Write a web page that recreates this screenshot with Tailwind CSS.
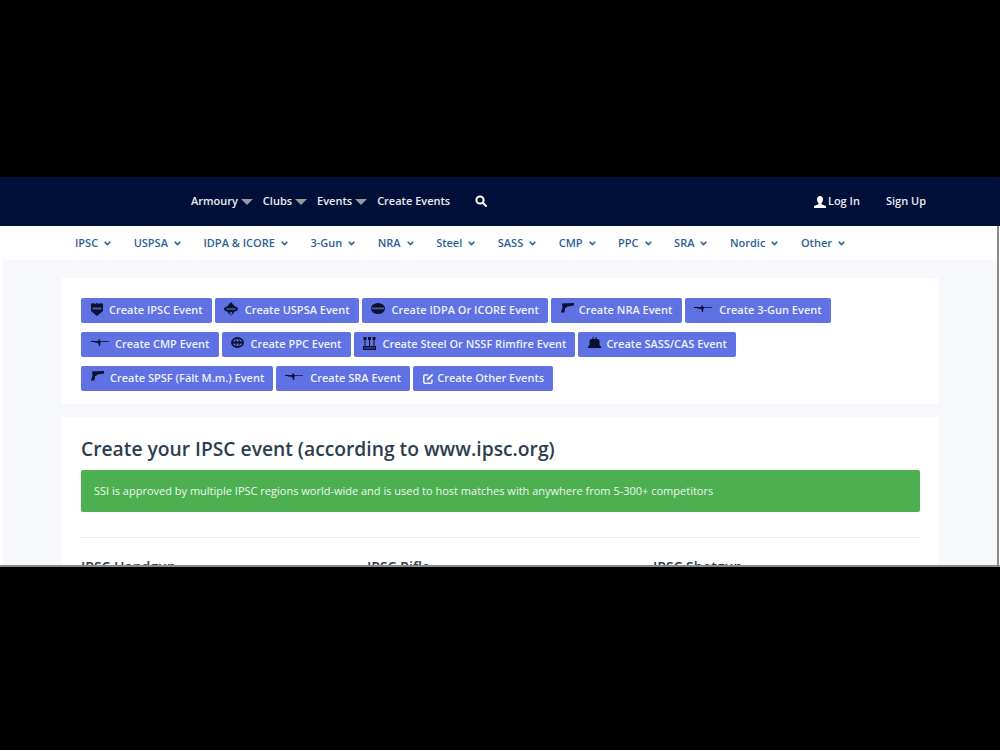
<!DOCTYPE html>
<html lang="en">
<head>
  <meta charset="UTF-8">
  <title>Create Events</title>
  <script src="https://cdn.jsdelivr.net/npm/@tailwindcss/browser@4"></script>
</head>
<body class="bg-black h-[750px] overflow-hidden font-['Open_Sans',sans-serif]">
  <div class="h-[177px]"></div>

  <div class="h-[390px] overflow-hidden bg-white flex flex-col border-b-2 border-[#8a8a8a]">
    <!-- TOP NAV -->
    <nav class="h-[49px] shrink-0 bg-[#001038] flex items-center text-[11px] font-semibold text-[#e8ecf2] pl-[191px]">
      <a class="mr-[3px]">Armoury</a>
      <span class="w-0 h-0 border-x-[6px] border-x-transparent border-t-[6px] border-t-[#9a9a9a] mr-[10px]"></span>
      <a class="mr-[3px]">Clubs</a>
      <span class="w-0 h-0 border-x-[6px] border-x-transparent border-t-[6px] border-t-[#9a9a9a] mr-[10px]"></span>
      <a class="mr-[3px]">Events</a>
      <span class="w-0 h-0 border-x-[6px] border-x-transparent border-t-[6px] border-t-[#9a9a9a] mr-[10px]"></span>
      <a class="mr-[25px]">Create Events</a>
      <svg class="w-[12px] h-[12px] -mt-[1px]" viewBox="0 0 12 12" fill="none" stroke="#fff" stroke-width="2"><circle cx="5" cy="5" r="3.6"/><path d="M7.8 7.8 11 11" stroke-linecap="round"/></svg>
      <svg class="w-[12px] h-[12px] ml-auto mr-[2px]" viewBox="0 0 12 12" fill="#fff"><path d="M6 0c1.800 0 3 1.300 3 3.200C9 5 8.300 6.400 7.500 7v1.200L12 10v2H0v-2l4.500-1.800V7C3.700 6.400 3 5 3 3.200 3 1.300 4.200 0 6 0z"/></svg>
      <a class="mr-[26px]">Log In</a>
      <a class="mr-[74px]">Sign Up</a>
    </nav>

    <!-- SUB NAV -->
    <nav class="h-[34px] shrink-0 mr-[1px] bg-white border-r-2 border-[#8a8a8a] flex items-center gap-[22.5px] pl-[75px] text-[11px] font-semibold text-[#2c5f95]">
      <a class="flex items-center gap-[6px]">IPSC<svg class="w-[7px] h-[5px]" viewBox="0 0 7 5" fill="none" stroke="#2c5f95" stroke-width="1.6"><path d="M.7.8 3.500 3.600 6.300.8"/></svg></a>
      <a class="flex items-center gap-[6px]">USPSA<svg class="w-[7px] h-[5px]" viewBox="0 0 7 5" fill="none" stroke="#2c5f95" stroke-width="1.6"><path d="M.7.8 3.500 3.600 6.300.8"/></svg></a>
      <a class="flex items-center gap-[6px]">IDPA &amp; ICORE<svg class="w-[7px] h-[5px]" viewBox="0 0 7 5" fill="none" stroke="#2c5f95" stroke-width="1.6"><path d="M.7.8 3.500 3.600 6.300.8"/></svg></a>
      <a class="flex items-center gap-[6px]">3-Gun<svg class="w-[7px] h-[5px]" viewBox="0 0 7 5" fill="none" stroke="#2c5f95" stroke-width="1.6"><path d="M.7.8 3.500 3.600 6.300.8"/></svg></a>
      <a class="flex items-center gap-[6px]">NRA<svg class="w-[7px] h-[5px]" viewBox="0 0 7 5" fill="none" stroke="#2c5f95" stroke-width="1.6"><path d="M.7.8 3.500 3.600 6.300.8"/></svg></a>
      <a class="flex items-center gap-[6px]">Steel<svg class="w-[7px] h-[5px]" viewBox="0 0 7 5" fill="none" stroke="#2c5f95" stroke-width="1.6"><path d="M.7.8 3.500 3.600 6.300.8"/></svg></a>
      <a class="flex items-center gap-[6px]">SASS<svg class="w-[7px] h-[5px]" viewBox="0 0 7 5" fill="none" stroke="#2c5f95" stroke-width="1.6"><path d="M.7.8 3.500 3.600 6.300.8"/></svg></a>
      <a class="flex items-center gap-[6px]">CMP<svg class="w-[7px] h-[5px]" viewBox="0 0 7 5" fill="none" stroke="#2c5f95" stroke-width="1.6"><path d="M.7.8 3.500 3.600 6.300.8"/></svg></a>
      <a class="flex items-center gap-[6px]">PPC<svg class="w-[7px] h-[5px]" viewBox="0 0 7 5" fill="none" stroke="#2c5f95" stroke-width="1.6"><path d="M.7.8 3.500 3.600 6.300.8"/></svg></a>
      <a class="flex items-center gap-[6px]">SRA<svg class="w-[7px] h-[5px]" viewBox="0 0 7 5" fill="none" stroke="#2c5f95" stroke-width="1.6"><path d="M.7.8 3.500 3.600 6.300.8"/></svg></a>
      <a class="flex items-center gap-[6px]">Nordic<svg class="w-[7px] h-[5px]" viewBox="0 0 7 5" fill="none" stroke="#2c5f95" stroke-width="1.6"><path d="M.7.8 3.500 3.600 6.300.8"/></svg></a>
      <a class="flex items-center gap-[6px]">Other<svg class="w-[7px] h-[5px]" viewBox="0 0 7 5" fill="none" stroke="#2c5f95" stroke-width="1.6"><path d="M.7.8 3.500 3.600 6.300.8"/></svg></a>
    </nav>

    <!-- CONTENT -->
    <main class="flex-1 ml-[3px] mr-[1px] bg-[#f6f8fb] pl-[59px] pr-[59px] pt-[18px] border-r-2 border-[#8a8a8a]">
      <section class="h-[126px] bg-white pl-[19px] pr-[18px] pt-[20px] flex flex-wrap content-start gap-x-[3px] gap-y-[9px] text-[11px] font-semibold text-[#eef0fb]">
        <a class="h-[25px] flex items-center gap-[6px] pl-[10px] pr-[9px] bg-[#5f71e3] rounded-[2px]"><svg class="w-[12px] h-[13px] -mt-[3px]" viewBox="0 0 12 13" fill="#0b1230"><path d="M0 1 2 0l2 1 2-1 2 1 2-1 2 1v7l-6 5-6-5z"/><path d="M1.500 4.500h9v2h-9z" fill="#4a5a9c"/></svg>Create IPSC Event</a>
        <a class="h-[25px] flex items-center gap-[7px] pl-[9px] pr-[9px] bg-[#5f71e3] rounded-[2px]"><svg class="w-[14px] h-[14px] -mt-[3px]" viewBox="0 0 14 14" fill="#0b1230"><path d="M7 0 10.500 4 7 14 3.500 4zM7 14l3.500-4h-7z"/><ellipse cx="7" cy="7" rx="7" ry="3.200"/><path d="M2.500 6.200h9v1.600h-9z" fill="#4a5a9c"/></svg>Create USPSA Event</a>
        <a class="h-[25px] flex items-center gap-[7px] pl-[9px] pr-[9px] bg-[#5f71e3] rounded-[2px]"><svg class="w-[14px] h-[11px] -mt-[4px]" viewBox="0 0 14 11" fill="#0b1230"><ellipse cx="7" cy="5.500" rx="7" ry="5.500"/><path d="M1 4.500h12v1.800H1z" fill="#4a5a9c"/></svg>Create IDPA Or ICORE Event</a>
        <a class="h-[25px] flex items-center gap-[5px] pl-[10px] pr-[10px] bg-[#5f71e3] rounded-[2px]"><svg class="w-[13px] h-[10px] -mt-[5px]" viewBox="0 0 13 10" fill="#0b1230"><path d="M1 .5 13 0v2.500L6.500 3.500 5 5H4L3.500 9.500H0L1.500 4.500z"/></svg>Create NRA Event</a>
        <a class="h-[25px] flex items-center gap-[7px] pl-[9px] pr-[9px] bg-[#5f71e3] rounded-[2px]"><svg class="w-[18px] h-[7px] -mt-[5px]" viewBox="0 0 18 7" fill="#0b1230"><path d="M0 2 3 1.700V3H0zM3 2h4l1-2 1.500 2H18v.7H10L9.500 4 9 7H8L7.500 4.500 5 3.500H3z"/></svg>Create 3-Gun Event</a>
        <a class="h-[25px] flex items-center gap-[6px] pl-[10px] pr-[10px] bg-[#5f71e3] rounded-[2px]"><svg class="w-[18px] h-[7px] -mt-[5px]" viewBox="0 0 18 7" fill="#0b1230"><path d="M0 2 3 1.700V3H0zM3 2h4l1-2 1.500 2H18v.7H10L9.500 4 9 7H8L7.500 4.500 5 3.500H3z"/></svg>Create CMP Event</a>
        <a class="h-[25px] flex items-center gap-[6px] pl-[9px] pr-[10px] bg-[#5f71e3] rounded-[2px]"><svg class="w-[13px] h-[11px] -mt-[4px]" viewBox="0 0 13 11" fill="none" stroke="#0b1230" stroke-width="1.6"><ellipse cx="6.500" cy="5.500" rx="5.600" ry="4.600"/><path d="M1 5.500h11" stroke-width="2.200"/><ellipse cx="6.500" cy="5.500" rx="2" ry="4.200" stroke-width="1"/></svg>Create PPC Event</a>
        <a class="h-[25px] flex items-center gap-[6px] pl-[9px] pr-[9px] bg-[#5f71e3] rounded-[2px]"><svg class="w-[13px] h-[13px] -mt-[3px]" viewBox="0 0 13 13" fill="#0b1230"><path d="M0 9h13v4H0z"/><path d="M.5 0h3v3h-1v6h-1V3h-1zM5 0h3v3H7v6H6V3H5zM9.500 0h3v3h-1v6h-1V3h-1z"/><path d="M1 10.500h11v1H1z" fill="#4a5a9c"/></svg>Create Steel Or NSSF Rimfire Event</a>
        <a class="h-[25px] flex items-center gap-[5px] pl-[10px] pr-[9px] bg-[#5f71e3] rounded-[2px]"><svg class="w-[13px] h-[11px] -mt-[4px]" viewBox="0 0 13 11" fill="#0b1230"><path d="M2.500 2h2V0h1v2h2V0h1v2h2v1l1 .5V8l1.500 1.500V11H0V9.500L1.500 8V3.500l1-.5z"/></svg>Create SASS/CAS Event</a>
        <a class="h-[25px] flex items-center gap-[6px] pl-[10px] pr-[9px] bg-[#5f71e3] rounded-[2px]"><svg class="w-[13px] h-[10px] -mt-[5px]" viewBox="0 0 13 10" fill="#0b1230"><path d="M1 .5 13 0v2.500L6.500 3.500 5 5H4L3.500 9.500H0L1.500 4.500z"/></svg>Create SPSF (Fält M.m.) Event</a>
        <a class="h-[25px] flex items-center gap-[7px] pl-[9px] pr-[9px] bg-[#5f71e3] rounded-[2px]"><svg class="w-[18px] h-[7px] -mt-[5px]" viewBox="0 0 18 7" fill="#0b1230"><path d="M0 2 3 1.700V3H0zM3 2h4l1-2 1.500 2H18v.7H10L9.500 4 9 7H8L7.500 4.500 5 3.500H3z"/></svg>Create SRA Event</a>
        <a class="h-[25px] flex items-center gap-[3px] pl-[10px] pr-[9px] bg-[#5f71e3] rounded-[2px]"><svg class="w-[11px] h-[11px]" viewBox="0 0 11 11" fill="none" stroke="#eef0fb" stroke-width="1.500"><path d="M9 6.500V9a1.200 1.200 0 0 1-1.200 1.200H2A1.200 1.200 0 0 1 .8 9V3.200A1.200 1.200 0 0 1 2 2h3"/><path d="M3.800 5.500 4 7.200 5.700 7 10.300 2 9 .7z" fill="#eef0fb" stroke="none"/></svg>Create Other Events</a>
      </section>

      <section class="mt-[13px] bg-white pl-[19px] pr-[18px] pt-[18px] h-[300px]">
        <h2 class="text-[19.25px] leading-[28px] font-semibold text-[#2c3e50]">Create your IPSC event (according to www.ipsc.org)</h2>
        <div class="mt-[7px] h-[42px] bg-[#4caf50] rounded-[2px] flex items-center px-[13px] text-[11px] text-[#eef7ee]">SSI is approved by multiple IPSC regions world-wide and is used to host matches with anywhere from 5-300+ competitors</div>
        <hr class="mt-[25px] border-[#e8eaed]">
        <div class="mt-[18px] grid grid-cols-[267px_267px_267px] gap-x-[19px] text-[14px] font-semibold text-[#2c3e50]">
          <h3>IPSC Handgun</h3>
          <h3>IPSC Rifle</h3>
          <h3>IPSC Shotgun</h3>
        </div>
      </section>
    </main>
  </div>
</body>
</html>
